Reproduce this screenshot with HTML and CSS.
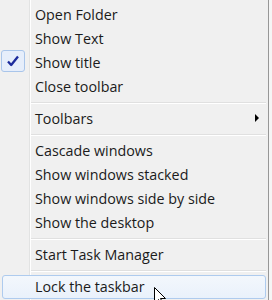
FILE: index.html
```html
<!DOCTYPE html>
<html lang="en">
<head>
    <meta charset="UTF-8">
    <title>Taskbar menu</title>
    <link rel="stylesheet" href="styles.css">
</head>
<body>
    <div class="menu">
        <div class="item">Open Folder</div>
        <div class="item">Show Text</div>
        <div class="item checked">
            <span class="check">
                <svg width="14" height="12" viewBox="0 0 14 12"><path d="M2 6.5 L5.2 10 L12 1.5" fill="none" stroke="#1c2b9c" stroke-width="2.3" stroke-linejoin="round"/></svg>
            </span>
            Show title
        </div>
        <div class="item">Close toolbar</div>
        <div class="sep"></div>
        <div class="item submenu">Toolbars<span class="arrow"></span></div>
        <div class="sep"></div>
        <div class="item">Cascade windows</div>
        <div class="item">Show windows stacked</div>
        <div class="item">Show windows side by side</div>
        <div class="item">Show the desktop</div>
        <div class="sep"></div>
        <div class="item">Start Task Manager</div>
        <div class="sep"></div>
        <div class="item hover">Lock the taskbar</div>
    </div>
    <!-- puntero del raton -->
    <svg class="cursor" width="14" height="20" viewBox="0 0 14 20">
        <path d="M0.5 0.5 L0.5 16.5 L4.5 12.5 L7.5 18.5 L9.5 17.5 L6.5 11.5 L11.5 11.5 Z" fill="#fff" stroke="#000" stroke-width="1"/>
    </svg>
</body>
</html>
```

FILE: styles.css
```css
body {
    margin: 0;
    width: 272px;
    height: 300px;
    overflow: hidden;
    background-color: #f5f5f5;
    font-family: "Open Sans", "Noto Sans", sans-serif;
    position: relative;
}

.menu {
    width: 269px;
    height: 300px;
    box-sizing: border-box;
    padding-top: 3px;
    border-right: 1px solid #979797;
    /* linea vertical del margen de iconos */
    background: linear-gradient(to right, transparent 29px, #e2e3e3 29px, #e2e3e3 30px, #ffffff 30px, #ffffff 31px, transparent 31px), #f0f0f0;
}

.item {
    position: relative;
    height: 24px;
    line-height: 24px;
    padding-left: 35px;
    font-size: 14.3px;
    color: #1b1b1b;
    white-space: nowrap;
}

.check {
    position: absolute;
    left: 1px;
    top: -1px;
    width: 22px;
    height: 20px;
    border: 1px solid #a9c5ea;
    border-radius: 3px;
    background-color: #e6eefb;
    display: flex;
    align-items: center;
    justify-content: center;
}

.arrow {
    position: absolute;
    right: 9px;
    top: 7px;
    width: 0;
    height: 0;
    border-top: 4px solid transparent;
    border-bottom: 4px solid transparent;
    border-left: 4px solid #000;
}

.sep {
    height: 8px;
    margin-left: 31px;
    margin-right: 2px;
    background: linear-gradient(to bottom, transparent 3px, #e0e0e0 3px, #e0e0e0 4px, #ffffff 4px, #ffffff 5px, transparent 5px);
}

.item.hover {
    margin-left: 2px;
    margin-right: 2px;
    height: 22px;
    line-height: 22px;
    padding-left: 32px;
    border: 1px solid #aecbee;
    border-radius: 3px;
    background: linear-gradient(to bottom, #f3f7fc, #e9f1fb);
}

.cursor {
    position: absolute;
    left: 154px;
    top: 287px;
}
```
